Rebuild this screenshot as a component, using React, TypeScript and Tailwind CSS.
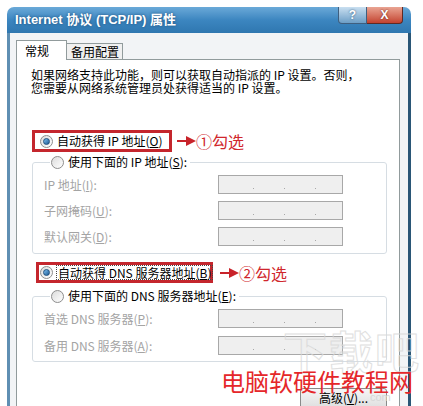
import React from "react";

// Windows XP style "Internet 协议 (TCP/IP) 属性" dialog

const font = "font-['SimSun','Noto_Sans_CJK_SC','Liberation_Sans',sans-serif]";

const Radio: React.FC<{ checked?: boolean }> = ({ checked }) => (
  <span className="w-[13px] h-[13px] shrink-0 rounded-full border border-[#8d8d8d] bg-gradient-to-br from-[#dcdcdc] to-white flex items-center justify-center">
    {checked && (
      <span className="w-[7px] h-[7px] rounded-full bg-gradient-to-br from-[#7ec0f0] to-[#1b5b95] border border-[#1d4f7d]" />
    )}
  </span>
);

const Arrow: React.FC = () => (
  <svg width="19" height="10" viewBox="0 0 19 10" className="shrink-0">
    <line x1="0" y1="5" x2="10" y2="5" stroke="#c8232a" strokeWidth="2" />
    <polygon points="9,0 19,5 9,10" fill="#c8232a" />
  </svg>
);

const IpField: React.FC = () => (
  <div className="w-[125px] h-[19px] border border-[#a8a8a8] bg-[#efefef] flex items-end pb-[4px] pl-[34px] gap-[30px]">
    <span className="w-px h-px bg-[#a8a8a8]" />
    <span className="w-px h-px bg-[#a8a8a8]" />
    <span className="w-px h-px bg-[#a8a8a8]" />
  </div>
);

const FieldRow: React.FC<{ label: React.ReactNode }> = ({ label }) => (
  <div className="flex items-center h-[19px]">
    <span className="w-[174px] text-[#a4a4a4]">{label}</span>
    <IpField />
  </div>
);

const App: React.FC = () => {
  return (
    <div className={`w-[423px] h-[406px] bg-white overflow-hidden relative text-[12px] text-black ${font}`}>
      <div className="ml-[7px] mt-[7px] w-[404px] h-[399px] flex flex-col rounded-t-[7px] overflow-hidden">
        {/* title bar */}
        <div className="h-[26px] shrink-0 bg-gradient-to-b from-[#6aa9d8] via-[#3c86c0] to-[#2f77b0] flex items-start justify-between pl-[8px] pr-[8px]">
          <span className="mt-[5px] text-white font-bold text-[13px] leading-[16px] [text-shadow:0_0_3px_#1c4d78] font-['Liberation_Sans','Noto_Sans_CJK_SC',sans-serif]">
            Internet 协议 (TCP/IP) 属性
          </span>
          <div className="flex h-[17px]">
            <div className="w-[29px] h-full rounded-bl-[4px] border border-t-0 border-[#3f5f7f] bg-gradient-to-b from-[#c9dff0] to-[#6c9ec6] flex items-center justify-center text-white font-bold text-[12px] leading-none [text-shadow:0_0_2px_#2a4d70] font-['Liberation_Sans',sans-serif]">
              ?
            </div>
            <div className="w-[36px] h-full rounded-br-[4px] border border-t-0 border-l-0 border-[#5f2a24] bg-gradient-to-b from-[#e9a493] to-[#c2412f] flex items-center justify-center text-white font-bold text-[12px] leading-none [text-shadow:0_0_2px_#5a1a10] font-['Liberation_Sans',sans-serif]">
              X
            </div>
          </div>
        </div>

        {/* body */}
        <div className="flex-1 bg-[#f2f4f6] border-l-[3px] border-r-[3px] border-l-[#5f8fb3] border-r-[#2a5676] pl-[6px] pr-[8px] pt-[7px] flex flex-col">
          {/* tabs */}
          <div className="flex items-end h-[20px] relative z-10">
            <div className="w-[51px] h-[20px] bg-white border border-b-0 border-[#919b9c] pl-[8px] pt-[2px] leading-[16px]">
              常规
            </div>
            <div className="w-[56px] h-[17px] bg-[#f0f0f0] border border-l-0 border-[#919b9c] pl-[4px] leading-[15px]">
              备用配置
            </div>
          </div>

          {/* tab page */}
          <div className="flex-1 bg-white border border-[#919b9c] -mt-px pl-[15px] pr-[12px] flex flex-col">
            <p className="mt-[8px] leading-[13px] -ml-px">
              如果网络支持此功能，则可以获取自动指派的 IP 设置。否则，
              <br />
              您需要从网络系统管理员处获得适当的 IP 设置。
            </p>

            {/* radio 1 */}
            <div className="mt-[36px] flex items-center">
              <div className="w-[140px] h-[22px] border-[3px] border-[#c4262d] flex items-center pl-[5px] gap-[4px]">
                <Radio checked />
                <span className="whitespace-nowrap">
                  自动获得 IP 地址(<u>O</u>)
                </span>
              </div>
              <div className="ml-[5px]">
                <Arrow />
              </div>
              <span className="text-[#d0262c] text-[16px] leading-[18px] font-['Noto_Sans_CJK_SC',sans-serif]">①勾选</span>
            </div>

            {/* static ip group */}
            <fieldset className="mt-[1px] w-[355px] border border-[#d6dde3] rounded-[3px] pl-[11px] pb-[7px]">
              <legend className="ml-[6px] pl-[1px] pr-[3px] h-[18px] flex items-center gap-[4px]">
                <Radio />
                <span className="whitespace-nowrap">
                  使用下面的 IP 地址(<u>S</u>):
                </span>
              </legend>
              <div className="mt-[4px] flex flex-col gap-[7px]">
                <FieldRow label={<>IP 地址(<u>I</u>):</>} />
                <FieldRow label={<>子网掩码(<u>U</u>):</>} />
                <FieldRow label={<>默认网关(<u>D</u>):</>} />
              </div>
            </fieldset>

            {/* radio 3 */}
            <div className="mt-[8px] flex items-center">
              <div className="ml-[4px] w-[177px] h-[21px] border-[3px] border-[#c4262d] flex items-center pl-[1px] gap-[3px]">
                <Radio checked />
                <span className="whitespace-nowrap border border-dotted border-[#444] leading-[13px] px-px">
                  自动获得 DNS 服务器地址(<u>B</u>)
                </span>
              </div>
              <div className="ml-[7px]">
                <Arrow />
              </div>
              <span className="text-[#d0262c] text-[16px] leading-[18px] font-['Noto_Sans_CJK_SC',sans-serif]">②勾选</span>
            </div>

            {/* static dns group */}
            <fieldset className="mt-[4px] w-[355px] border border-[#d6dde3] rounded-[3px] pl-[11px] pb-[6px]">
              <legend className="ml-[6px] pl-[1px] pr-[3px] h-[18px] flex items-center gap-[4px]">
                <Radio />
                <span className="whitespace-nowrap">
                  使用下面的 DNS 服务器地址(<u>E</u>):
                </span>
              </legend>
              <div className="mt-[4px] flex flex-col gap-[8px]">
                <FieldRow label={<>首选 DNS 服务器(<u>P</u>):</>} />
                <FieldRow label={<>备用 DNS 服务器(<u>A</u>):</>} />
              </div>
            </fieldset>

            <div className="mt-[26px] w-[355px] flex justify-end">
              <button className="w-[87px] h-[23px] border border-[#8a8a8a] rounded-[3px] bg-gradient-to-b from-[#f6f6f6] to-[#dcdcdc] text-[12px] leading-[14px] pb-[4px]">
                高级(<u>V</u>)...
              </button>
            </div>
          </div>
        </div>
      </div>

      {/* watermarks */}
      <div className="absolute left-[283px] top-[326px] text-[44px] leading-[48px] font-bold tracking-[2px] text-transparent [-webkit-text-stroke:1px_#d8d8d8] opacity-80 font-['Noto_Sans_CJK_SC',sans-serif]">
        下载吧
      </div>
      <div className="absolute left-[370px] top-[391px] text-[11px] leading-[12px] text-[#d6d6d6] font-['Liberation_Sans',sans-serif]">
        com
      </div>
      <div className="absolute left-[221px] top-[365px] text-[24px] leading-[32px] text-[#e5272a] font-['Noto_Sans_CJK_SC',sans-serif] whitespace-nowrap">
        电脑软硬件教程网
      </div>
    </div>
  );
};

export default App;
